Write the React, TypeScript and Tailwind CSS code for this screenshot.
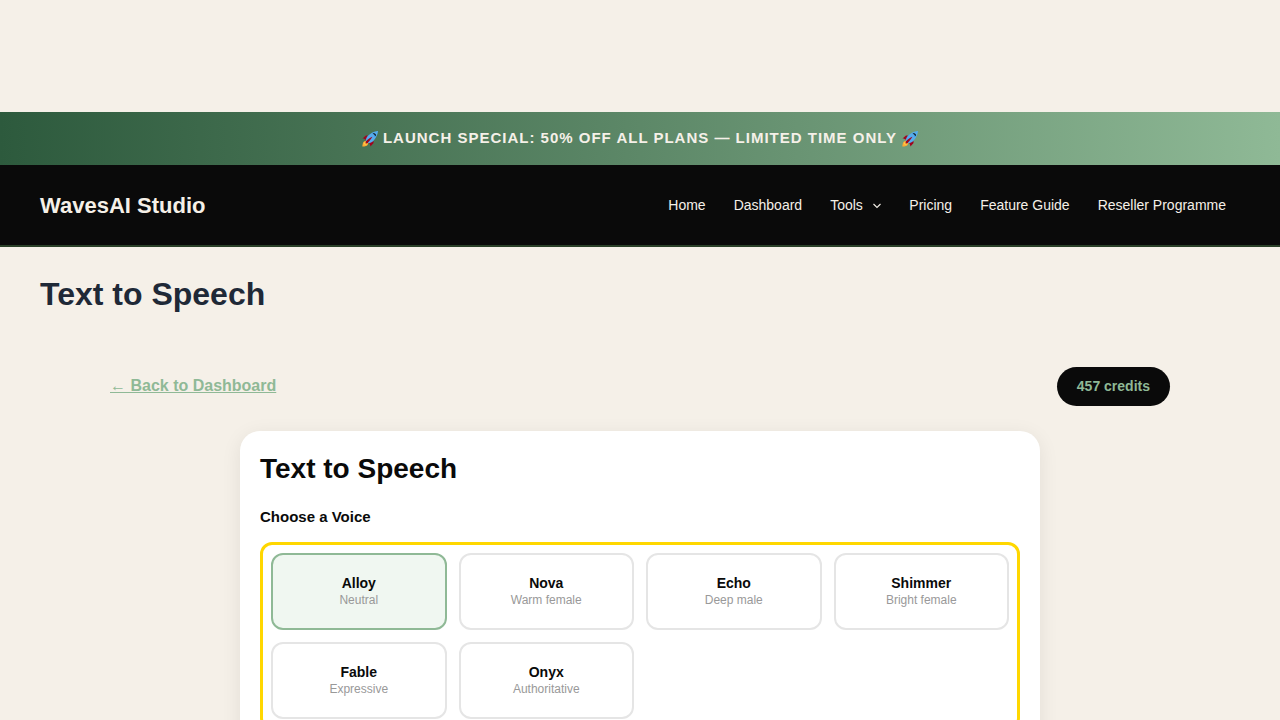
import React from "react";

const voices = [
  ["Alloy", "Neutral"],
  ["Nova", "Warm female"],
  ["Echo", "Deep male"],
  ["Shimmer", "Bright female"],
  ["Fable", "Expressive"],
  ["Onyx", "Authoritative"],
];

const nav = ["Home", "Dashboard", "Tools", "Pricing", "Feature Guide", "Reseller Programme"];

function Rocket() {
  return (
    <svg width="16" height="16" viewBox="0 0 36 36" className="shrink-0" aria-label="rocket">
      <path d="M1 17l8-7 16 1 1 16-7 8s.001-5.999-6-12-12-6-12-6z" fill="#A0041E" />
      <path d="M.973 35s-.036-7.979 2.985-11S15 21.187 15 21.187 14.999 29 11.999 32c-3 3-11.026 3-11.026 3z" fill="#FFAC33" />
      <circle cx="8" cy="27.500" r="3.500" fill="#FFCC4D" />
      <path d="M35.999 0s-10 0-22 10c-6 5-6 14-4 16s11 2 16-4c10-12 10-22 10-22z" fill="#55ACEE" />
      <path d="M26.999 5c-1.623 0-3.013.971-3.641 2.360.502-.227 1.055-.36 1.641-.36 2.209 0 4 1.791 4 4 0 .586-.133 1.139-.359 1.640 1.388-.627 2.359-2.017 2.359-3.640 0-2.209-1.791-4-4-4z" fill="#000" />
      <path d="M8 28s0-4 1-5 13.001-10.999 14-10-9.001 13-10.001 14S8 28 8 28z" fill="#A0041E" />
    </svg>
  );
}

export default function App() {
  return (
    <div className="h-[720px] overflow-hidden bg-[#f5f0e8] font-['Liberation_Sans',Arial,sans-serif] text-[#0a0a0a]">
      <div className="h-28" />
      <div className="flex h-[53px] items-center justify-center gap-[5px] bg-gradient-to-r from-[#2d5a3d] to-[#8fb996] text-[15px] font-bold tracking-[1px] text-[#f5f0e8]">
        <Rocket />
        <span>LAUNCH SPECIAL: 50% OFF ALL PLANS — LIMITED TIME ONLY</span>
        <Rocket />
      </div>
      <header className="flex h-[82px] items-center justify-between border-b-2 border-[#2a4028] bg-[#0a0a0a] pl-10 pr-[54px] text-[#f5f0e8]">
        <div className="text-[22px] font-bold">WavesAI Studio</div>
        <nav className="flex items-center gap-7 text-sm">
          {nav.map((item) => (
            <a key={item} className="flex items-center">
              {item}
              {item === "Tools" && (
                <svg className="ml-[10.500px] mt-px" width="8" height="6" viewBox="0 0 8 6" fill="none" stroke="#f5f0e8" strokeWidth="1.1">
                  <path d="M.5 1 4 4.500 7.500 1" />
                </svg>
              )}
            </a>
          ))}
        </nav>
      </header>
      <main>
        <h1 className="mt-[28px] pl-10 text-[32px] leading-[38px] font-bold text-[#1f2937]">Text to Speech</h1>
        <div className="mx-auto mt-[54px] flex h-[39px] w-[1060px] items-center justify-between">
          <a className="mb-[2px] text-base font-bold text-[#8fb996] underline">← Back to Dashboard</a>
          <div className="rounded-[20px] bg-[#0a0a0a] px-5 py-[11px] text-sm leading-[17px] font-bold text-[#8fb996]">457 credits</div>
        </div>
        <section className="mx-auto mt-[25px] w-[800px] rounded-[20px] bg-white p-5 shadow-[0_4px_20px_rgba(0,0,0,0.08)]">
          <h2 className="text-[28px] leading-[36px] font-bold">Text to Speech</h2>
          <h3 className="mt-[21px] text-[15px] leading-[17px] font-bold">Choose a Voice</h3>
          <div className="mt-[17px] grid grid-cols-4 gap-3 rounded-xl border-[3px] border-[#ffd700] p-2">
            {voices.map(([name, desc], i) => (
              <button
                key={name}
                className={`flex h-[77px] flex-col items-center justify-center rounded-xl border-2 pb-[2px] ${
                  i === 0 ? "border-[#8fb996] bg-[#f0f7f1]" : "border-[#e5e5e5] bg-white"
                }`}
              >
                <span className="text-sm leading-[16px] font-bold">{name}</span>
                <span className="mt-[2px] text-xs leading-[14px] text-[#999]">{desc}</span>
              </button>
            ))}
          </div>
        </section>
      </main>
    </div>
  );
}
